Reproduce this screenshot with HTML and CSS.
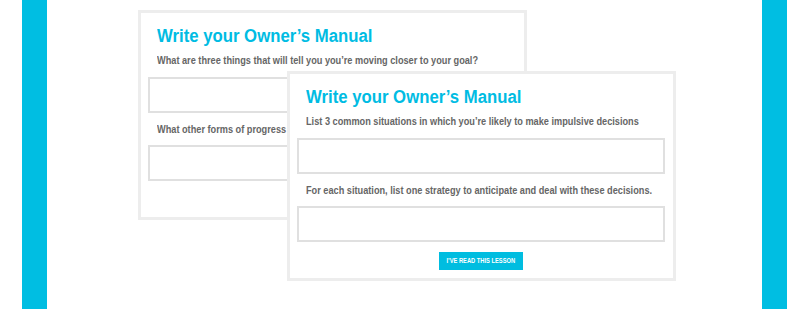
FILE: index.html
```html
<!DOCTYPE html>
<html lang="en">
<head>
<meta charset="utf-8">
<title>Write your Owner's Manual</title>
<link rel="stylesheet" href="styles.css">
</head>
<body>
<div class="page">
  <div class="gutter gutter-left"></div>
  <div class="bar"></div>
  <main class="stage">
    <div class="stack">
      <section class="card card-back">
        <h2 class="card-title"><span class="narrow">Write your Owner’s Manual</span></h2>
        <p class="question q-first"><span class="narrow">What are three things that will tell you you’re moving closer to your goal?</span></p>
        <div class="answer"></div>
        <p class="question"><span class="narrow">What other forms of progress will you notice along the way?</span></p>
        <div class="answer"></div>
        <div class="actions"><button class="btn" type="button"><span class="btn-label">I’VE READ THIS LESSON</span></button></div>
      </section>
      <section class="card card-front">
        <h2 class="card-title"><span class="narrow">Write your Owner’s Manual</span></h2>
        <p class="question q-first"><span class="narrow">List 3 common situations in which you’re likely to make impulsive decisions</span></p>
        <div class="answer"></div>
        <p class="question"><span class="narrow">For each situation, list one strategy to anticipate and deal with these decisions.</span></p>
        <div class="answer"></div>
        <div class="actions"><button class="btn" type="button"><span class="btn-label">I’VE READ THIS LESSON</span></button></div>
      </section>
    </div>
  </main>
  <div class="bar"></div>
  <div class="gutter gutter-right"></div>
</div>
</body>
</html>
```
FILE: styles.css
```css
* { box-sizing: border-box; }

html, body {
  margin: 0;
  padding: 0;
  background: #ffffff;
}

body {
  font-family: "Liberation Sans", Arial, sans-serif;
  width: 810px;
  height: 309px;
  overflow: hidden;
}

.page {
  display: flex;
  height: 309px;
}

.gutter-left { width: 22px; flex: none; }
.gutter-right { width: 23px; flex: none; }

.bar {
  width: 25px;
  flex: none;
  background: #00bee2;
}

.stage {
  width: 715px;
  flex: none;
  padding: 10px 0 0 91px;
}

.stack {
  display: grid;
}

.card {
  grid-area: 1 / 1;
  position: relative;
  width: 389px;
  height: 210px;
  background: #ffffff;
  border: 3px solid #ededed;
  padding: 12px 8px 8px 7px;
  display: flex;
  flex-direction: column;
  overflow: hidden;
}

.card-back {
  z-index: 1;
}

.card-front {
  z-index: 2;
  margin: 61px 0 0 149px;
}

.narrow {
  display: inline-block;
  transform-origin: 0 50%;
  white-space: nowrap;
}

.card-title {
  margin: 0 0 0 9px;
  font-size: 18px;
  line-height: 22px;
  font-weight: 700;
  color: #00bce3;
  white-space: nowrap;
}

.card-title .narrow {
  transform: scaleX(0.93);
}

.question {
  margin: 9px 0 9px 9px;
  font-size: 11px;
  line-height: 14px;
  font-weight: 700;
  color: #666666;
  white-space: nowrap;
}

.question .narrow {
  transform: scaleX(0.835);
}

.q-first {
  margin-top: 6px;
  margin-bottom: 10px;
}

.answer {
  height: 36px;
  border: 2px solid #e0e0e0;
  background: #ffffff;
  flex: none;
}

.actions {
  display: flex;
  justify-content: center;
  margin-top: 10px;
}

.btn {
  height: 18px;
  width: 84px;
  padding: 0;
  border: 0;
  background: #00bde0;
  color: #ffffff;
  font-family: "Liberation Sans", Arial, sans-serif;
  font-weight: 700;
  font-size: 7px;
  line-height: 18px;
  display: flex;
  justify-content: center;
  overflow: hidden;
}

.btn-label {
  display: inline-block;
  white-space: nowrap;
  transform: scaleX(0.82);
  transform-origin: 50% 50%;
}
```
